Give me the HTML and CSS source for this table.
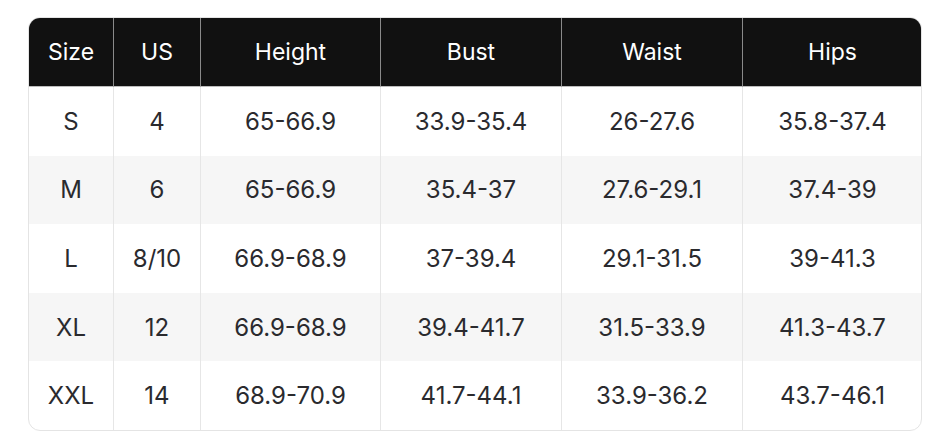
FILE: index.html
```html
<!DOCTYPE html>
<html lang="en">
<head>
<meta charset="utf-8">
<title>Size Chart</title>
<link rel="stylesheet" href="styles.css">
</head>
<body>
<div class="chart">
  <table class="size-table">
    <colgroup>
      <col class="c-size">
      <col class="c-us">
      <col class="c-wide">
      <col class="c-wide2">
      <col class="c-wide2">
      <col class="c-wide">
    </colgroup>
    <thead>
      <tr>
        <th>Size</th><th>US</th><th>Height</th><th>Bust</th><th>Waist</th><th>Hips</th>
      </tr>
    </thead>
    <tbody>
      <tr><td>S</td><td>4</td><td>65-66.9</td><td>33.9-35.4</td><td>26-27.6</td><td>35.8-37.4</td></tr>
      <tr><td>M</td><td>6</td><td>65-66.9</td><td>35.4-37</td><td>27.6-29.1</td><td>37.4-39</td></tr>
      <tr><td>L</td><td>8/10</td><td>66.9-68.9</td><td>37-39.4</td><td>29.1-31.5</td><td>39-41.3</td></tr>
      <tr><td>XL</td><td>12</td><td>66.9-68.9</td><td>39.4-41.7</td><td>31.5-33.9</td><td>41.3-43.7</td></tr>
      <tr><td>XXL</td><td>14</td><td>68.9-70.9</td><td>41.7-44.1</td><td>33.9-36.2</td><td>43.7-46.1</td></tr>
    </tbody>
  </table>
</div>
</body>
</html>
```

FILE: styles.css
```css
html, body {
  margin: 0;
  background: #ffffff;
}
body {
  padding: 17px 28px;
  font-family: Inter, "Noto Sans", "Liberation Sans", sans-serif;
}
.chart {
  width: 894px;
  border: 1px solid #e4e4e4;
  border-radius: 12px;
  overflow: hidden;
  box-sizing: border-box;
}
.size-table {
  width: 100%;
  border-collapse: separate;
  border-spacing: 0;
  table-layout: fixed;
}
.c-size { width: 84px; }
.c-us { width: 87px; }
.c-wide { width: 180px; }
.c-wide2 { width: 181px; }
.size-table th {
  height: 68px;
  background: #111111;
  color: #ffffff;
  font-weight: 400;
  font-size: 23px;
  text-align: center;
  border-left: 1px solid #8a8a8a;
  border-bottom: 1px solid #bdbdbd;
  padding: 0;
}
.size-table td {
  height: 68.6px;
  color: #2a2a2e;
  font-size: 24px;
  text-align: center;
  border-left: 1px solid #e6e6e6;
  padding: 0;
}
.size-table th:first-child,
.size-table td:first-child {
  border-left: none;
}
.size-table tbody tr:nth-child(even) td {
  background: #f6f6f6;
}
```
